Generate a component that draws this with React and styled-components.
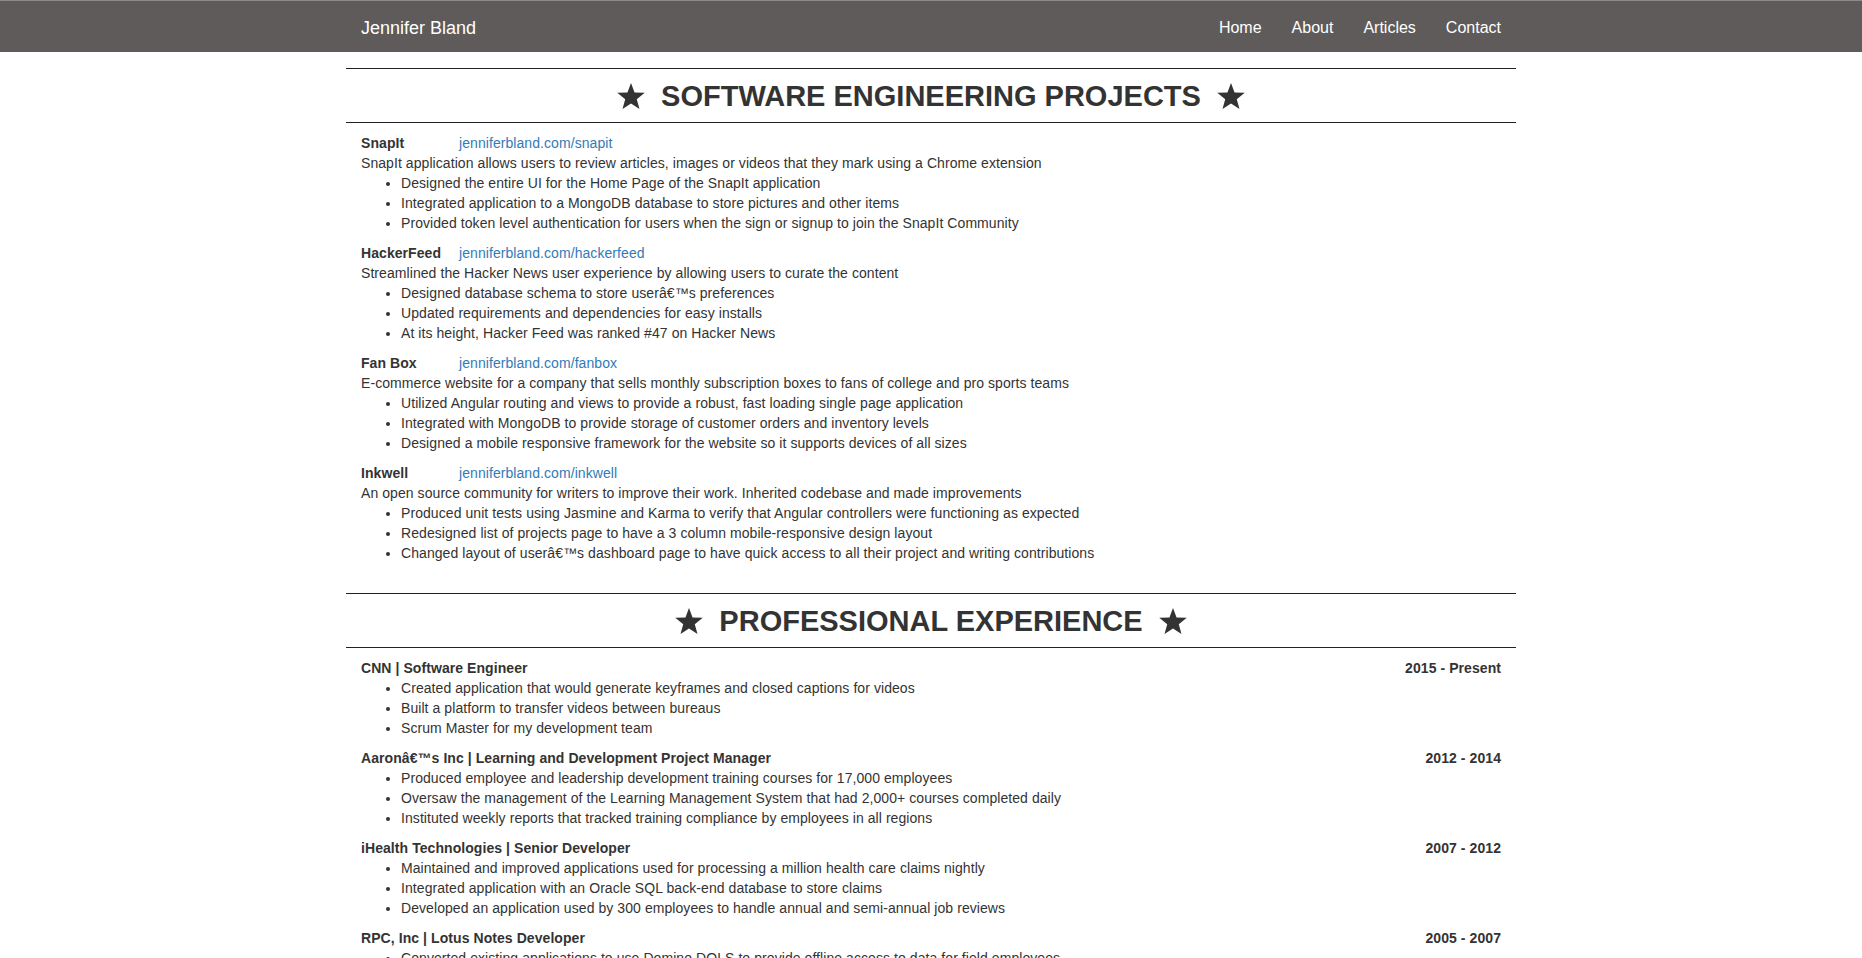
import React from "react";
import styled, { createGlobalStyle } from "styled-components";

const GlobalStyle = createGlobalStyle`
  html { scrollbar-width: none; }
  html::-webkit-scrollbar { display: none; }
  * { box-sizing: border-box; }
  body {
    margin: 0;
    background: #fff;
    color: #333;
    font-family: "Liberation Sans", Arial, Helvetica, sans-serif;
    font-size: 14px;
    line-height: 20px;
  }
`;

const NavBar = styled.nav`
  height: 52px;
  background: #5e5b5a;
  border-top: 1px solid #8c8988;
  margin-bottom: 16px;
`;

const Container = styled.div`
  width: 1170px;
  margin: 0 auto;
  padding: 0 15px;
`;

const NavInner = styled(Container)`
  height: 100%;
  display: flex;
  align-items: center;
  justify-content: space-between;
`;

const Brand = styled.a`
  color: #fff;
  font-size: 18px;
  line-height: 20px;
  text-decoration: none;
  padding-top: 2px;
`;

const NavLinks = styled.ul`
  display: flex;
  list-style: none;
  margin: 0 -15px 0 0;
  padding: 0;
`;

const NavLink = styled.a`
  display: block;
  color: #fff;
  font-size: 16px;
  line-height: 20px;
  padding: 2px 15px 0;
  text-decoration: none;
`;

const PageContainer = styled.main`
  width: 1170px;
  margin: 0 auto;
`;

const Section = styled.section`
  & + & {
    margin-top: 30px;
  }
`;

const SectionHeader = styled.h2`
  margin: 0;
  height: 55px;
  border-top: 1px solid #222;
  border-bottom: 1px solid #222;
  display: flex;
  align-items: center;
  justify-content: center;
  gap: 15px;
  font-size: 29px;
  font-weight: 700;
  line-height: 1;
  color: #333;
  padding-top: 1px;
`;

const StarIcon = styled.svg`
  width: 30px;
  height: 29px;
  fill: #333;
  flex: none;
`;

const Items = styled.div`
  padding: 10px 15px 0;
  letter-spacing: 0.07px;
`;

const Item = styled.div``;

const HeadRow = styled.div`
  display: flex;
  align-items: baseline;
`;

const ProjectName = styled.strong`
  width: 98px;
  flex: none;
  font-weight: 700;
`;

const ProjectLink = styled.a`
  color: #337ab7;
  text-decoration: none;
`;

const JobRow = styled.div`
  display: flex;
  justify-content: space-between;
  font-weight: 700;
`;

const Bullets = styled.ul`
  margin: 0 0 10px;
  padding-left: 40px;
`;

const Star = () => (
  <StarIcon viewBox="0 0 24 23" aria-hidden="true">
    <path d="M12 0.6l2.85 7.62 8.15.36-6.38 5.08 2.18 7.86L12 17.02l-6.8 4.5 2.18-7.86L1 8.58l8.15-.36z" />
  </StarIcon>
);

const projects = [
  {
    name: "SnapIt",
    url: "jenniferbland.com/snapit",
    desc: "SnapIt application allows users to review articles, images or videos that they mark using a Chrome extension",
    bullets: [
      "Designed the entire UI for the Home Page of the SnapIt application",
      "Integrated application to a MongoDB database to store pictures and other items",
      "Provided token level authentication for users when the sign or signup to join the SnapIt Community",
    ],
  },
  {
    name: "HackerFeed",
    url: "jenniferbland.com/hackerfeed",
    desc: "Streamlined the Hacker News user experience by allowing users to curate the content",
    bullets: [
      "Designed database schema to store userâ€™s preferences",
      "Updated requirements and dependencies for easy installs",
      "At its height, Hacker Feed was ranked #47 on Hacker News",
    ],
  },
  {
    name: "Fan Box",
    url: "jenniferbland.com/fanbox",
    desc: "E-commerce website for a company that sells monthly subscription boxes to fans of college and pro sports teams",
    bullets: [
      "Utilized Angular routing and views to provide a robust, fast loading single page application",
      "Integrated with MongoDB to provide storage of customer orders and inventory levels",
      "Designed a mobile responsive framework for the website so it supports devices of all sizes",
    ],
  },
  {
    name: "Inkwell",
    url: "jenniferbland.com/inkwell",
    desc: "An open source community for writers to improve their work. Inherited codebase and made improvements",
    bullets: [
      "Produced unit tests using Jasmine and Karma to verify that Angular controllers were functioning as expected",
      "Redesigned list of projects page to have a 3 column mobile-responsive design layout",
      "Changed layout of userâ€™s dashboard page to have quick access to all their project and writing contributions",
    ],
  },
];

const jobs = [
  {
    title: "CNN | Software Engineer",
    dates: "2015 - Present",
    bullets: [
      "Created application that would generate keyframes and closed captions for videos",
      "Built a platform to transfer videos between bureaus",
      "Scrum Master for my development team",
    ],
  },
  {
    title: "Aaronâ€™s Inc | Learning and Development Project Manager",
    dates: "2012 - 2014",
    bullets: [
      "Produced employee and leadership development training courses for 17,000 employees",
      "Oversaw the management of the Learning Management System that had 2,000+ courses completed daily",
      "Instituted weekly reports that tracked training compliance by employees in all regions",
    ],
  },
  {
    title: "iHealth Technologies | Senior Developer",
    dates: "2007 - 2012",
    bullets: [
      "Maintained and improved applications used for processing a million health care claims nightly",
      "Integrated application with an Oracle SQL back-end database to store claims",
      "Developed an application used by 300 employees to handle annual and semi-annual job reviews",
    ],
  },
  {
    title: "RPC, Inc | Lotus Notes Developer",
    dates: "2005 - 2007",
    bullets: [
      "Converted existing applications to use Domino DOLS to provide offline access to data for field employees",
    ],
  },
];

export default function App() {
  return (
    <>
      <GlobalStyle />
      <NavBar>
        <NavInner>
          <Brand href="#">Jennifer Bland</Brand>
          <NavLinks>
            {["Home", "About", "Articles", "Contact"].map((l) => (
              <li key={l}>
                <NavLink href="#">{l}</NavLink>
              </li>
            ))}
          </NavLinks>
        </NavInner>
      </NavBar>
      <PageContainer>
        <Section>
          <SectionHeader>
            <Star />
            <span>SOFTWARE ENGINEERING PROJECTS</span>
            <Star />
          </SectionHeader>
          <Items>
            {projects.map((p) => (
              <Item key={p.name}>
                <HeadRow>
                  <ProjectName>{p.name}</ProjectName>
                  <ProjectLink href="#">{p.url}</ProjectLink>
                </HeadRow>
                <div>{p.desc}</div>
                <Bullets>
                  {p.bullets.map((b) => (
                    <li key={b}>{b}</li>
                  ))}
                </Bullets>
              </Item>
            ))}
          </Items>
        </Section>
        <Section>
          <SectionHeader>
            <Star />
            <span>PROFESSIONAL EXPERIENCE</span>
            <Star />
          </SectionHeader>
          <Items>
            {jobs.map((j) => (
              <Item key={j.title}>
                <JobRow>
                  <span>{j.title}</span>
                  <span>{j.dates}</span>
                </JobRow>
                <Bullets>
                  {j.bullets.map((b) => (
                    <li key={b}>{b}</li>
                  ))}
                </Bullets>
              </Item>
            ))}
          </Items>
        </Section>
      </PageContainer>
    </>
  );
}
